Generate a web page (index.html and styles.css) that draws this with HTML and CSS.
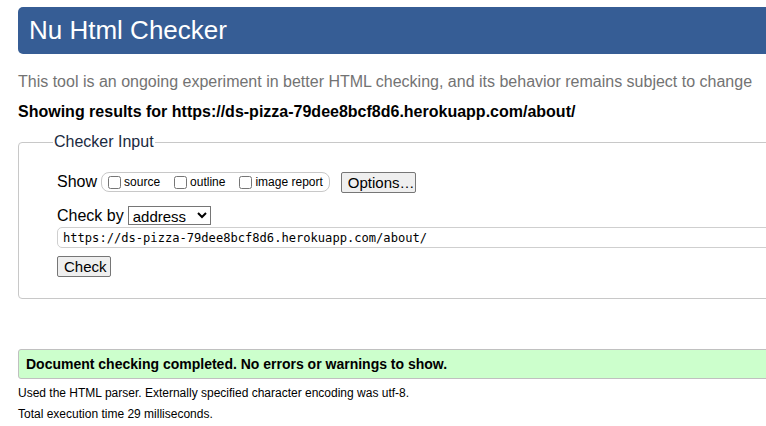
FILE: index.html
```html
<!DOCTYPE html>
<html>
<head>
<meta charset="utf-8">
<title>Nu Html Checker</title>
<link rel="stylesheet" href="styles.css">
</head>
<body>
<div class="page">
  <h1 class="title">Nu Html Checker</h1>
  <p class="intro">This tool is an ongoing experiment in better HTML checking, and its behavior remains subject to change</p>
  <p class="results">Showing results for https://ds-pizza-79dee8bcf8d6.herokuapp.com/about/</p>
  <fieldset class="input-box">
    <legend class="legend">Checker Input</legend>
    <div class="row show-row">
      <span class="label">Show</span>
      <fieldset class="show-options">
        <label class="opt"><input type="checkbox" class="cb"><span>source</span></label>
        <label class="opt"><input type="checkbox" class="cb"><span>outline</span></label>
        <label class="opt"><input type="checkbox" class="cb"><span>image report</span></label>
      </fieldset>
      <button class="btn options-btn">Options…</button>
    </div>
    <div class="row checkby-row">
      <span class="label">Check by</span>
      <select class="select"><option>address</option></select>
    </div>
    <input class="url" type="text" value="https://ds-pizza-79dee8bcf8d6.herokuapp.com/about/">
    <div class="row">
      <button class="btn check-btn">Check</button>
    </div>
  </fieldset>
  <div class="success"><span class="success-text">Document checking completed. No errors or warnings to show.</span></div>
  <p class="detail first">Used the HTML parser. Externally specified character encoding was utf-8.</p>
  <p class="detail">Total execution time 29 milliseconds.</p>
</div>
</body>
</html>
```
FILE: styles.css
```css
html, body {
  margin: 0;
  padding: 0;
  overflow: hidden;
  background: #fff;
}
body {
  font-family: "Liberation Sans", Arial, sans-serif;
  color: #000;
}
.page {
  width: 800px;
  padding: 7px 0 0 18px;
}
.title {
  margin: 0;
  height: 47px;
  line-height: 47px;
  background: #365d95;
  color: #fff;
  font-weight: normal;
  font-size: 26px;
  padding-left: 11px;
  border-radius: 5px 0 0 5px;
}
.intro {
  margin: 18px 0 0 0;
  font-size: 16px;
  line-height: 20px;
  color: #737373;
}
.results {
  margin: 10px 0 0 0;
  font-size: 16px;
  line-height: 20px;
  font-weight: bold;
}
.input-box {
  margin: 11px 0 0 0;
  border: 1px solid #c8c8c8;
  border-radius: 4px;
  padding: 20px 0 21px 38px;
  min-width: 0;
}
.legend {
  margin-left: -4px;
  padding: 0 1px;
  font-size: 16px;
  color: #1a2a40;
}
.row {
  display: flex;
  align-items: center;
}
.label {
  font-size: 16px;
}
.show-row {
  height: 22px;
}
.show-options {
  margin: 0 0 0 4px;
  padding: 0 6px 0 6px;
  height: 18px;
  border: 1px solid #c8c8c8;
  border-radius: 8px;
  display: flex;
  align-items: center;
  min-width: 0;
}
.opt {
  display: flex;
  align-items: center;
  font-size: 12px;
  margin-right: 14px;
}
.opt:last-child {
  margin-right: 0;
}
.cb {
  margin: 0 3px 0 0;
  width: 13px;
  height: 13px;
}
.btn {
  font-family: "Liberation Sans", Arial, sans-serif;
  font-size: 15px;
  background: #efefef;
  border: 1px solid #767676;
  border-radius: 2px;
  color: #000;
  padding: 0 6px;
}
.options-btn {
  margin-left: 11px;
  height: 21px;
  width: 75px;
}
.checkby-row {
  margin-top: 12px;
  height: 21px;
}
.select {
  margin-left: 4px;
  width: 83px;
  height: 19px;
  font-family: "Liberation Sans", Arial, sans-serif;
  font-size: 15px;
  border: 1px solid #767676;
  border-radius: 0;
  background: #fff;
  padding: 0;
}
.url {
  display: block;
  box-sizing: border-box;
  margin-top: 1px;
  width: 760px;
  height: 21px;
  border: 1px solid #cfcfcf;
  border-radius: 5px 0 0 5px;
  font-family: "DejaVu Sans Mono", "Liberation Mono", monospace;
  font-size: 12.1px;
  padding: 0 5px;
  color: #000;
}
.check-btn {
  margin-top: 8px;
  width: 54px;
  height: 21px;
}
.success {
  margin-top: 50px;
  box-sizing: border-box;
  height: 30px;
  background: #ccffcc;
  border: 1px solid #c0c0c0;
  border-radius: 3px;
  padding-left: 7px;
  display: flex;
  align-items: center;
}
.success-text {
  font-size: 14px;
  font-weight: bold;
}
.detail {
  margin: 0;
  font-size: 12px;
  line-height: 21px;
}
.detail.first {
  margin-top: 4px;
}
```
